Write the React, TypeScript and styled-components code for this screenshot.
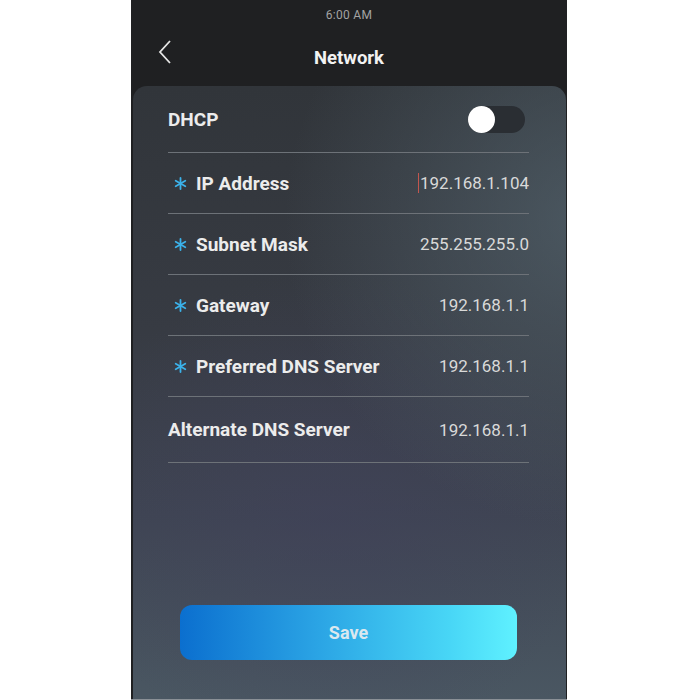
import React from "react";
import styled, { createGlobalStyle } from "styled-components";

const Global = createGlobalStyle`
  html, body { margin: 0; padding: 0; background: #ffffff; }
  body { font-family: Roboto, "Noto Sans", "Liberation Sans", sans-serif; }
`;

const Screen = styled.div`
  width: 436px;
  height: 699px;
  margin-left: 131px;
  background: #1f2022;
  display: flex;
  flex-direction: column;
  border-bottom: 1px solid #8a9096;
`;

const StatusBar = styled.div`
  height: 30px;
  display: flex;
  align-items: center;
  justify-content: center;
  font-size: 12px;
  color: #a3a3a3;
  letter-spacing: 0.3px;
`;

const TitleBar = styled.div`
  position: relative;
  height: 56px;
  display: flex;
  align-items: center;
  justify-content: center;
`;

const BackButton = styled.button`
  position: absolute;
  left: 22px;
  top: 8px;
  width: 24px;
  height: 28px;
  padding: 0;
  border: none;
  background: transparent;
  display: flex;
  align-items: center;
  justify-content: center;
`;

const Title = styled.h1`
  margin: 0 0 1px 0;
  font-size: 18.5px;
  font-weight: 700;
  color: #f2f2f2;
`;

const Panel = styled.div`
  flex: 1;
  margin: 0 1px 0 2px;
  border-radius: 14px 14px 0 0;
  padding: 0 37px 0 35px;
  display: flex;
  flex-direction: column;
  background:
    radial-gradient(ellipse 70% 50% at 105% 22%, rgba(84, 100, 110, 0.7), rgba(84, 100, 110, 0) 100%),
    radial-gradient(ellipse 60% 40% at 45% 70%, rgba(64, 64, 90, 0.5), rgba(64, 64, 90, 0) 100%),
    linear-gradient(180deg, #31353a 0%, #373b43 40%, #3f4553 70%, #4a5762 100%);
`;

const Row = styled.div<{ $h: number }>`
  height: ${(p) => p.$h}px;
  display: flex;
  align-items: center;
  justify-content: space-between;
  border-bottom: 1px solid #6d7278;
`;

const LabelWrap = styled.div<{ $required?: boolean }>`
  display: flex;
  align-items: center;
  gap: 9px;
  padding-left: ${(p) => (p.$required ? "6px" : "0")};
`;

const Label = styled.span`
  font-size: 19px;
  font-weight: 700;
  color: #ececec;
`;

const Value = styled.span`
  font-size: 17px;
  color: #d9d9d9;
  display: flex;
  align-items: center;
`;

const Cursor = styled.span`
  display: inline-block;
  width: 1px;
  height: 20px;
  background: #c2564e;
  margin-right: 1px;
`;

const Toggle = styled.div`
  width: 57px;
  height: 27px;
  margin-right: 4px;
  border-radius: 14px;
  background: #2a2e33;
  display: flex;
  align-items: center;
`;

const Knob = styled.div`
  width: 27px;
  height: 27px;
  border-radius: 50%;
  background: #ffffff;
`;

const SaveButton = styled.button`
  margin: auto auto 39px;
  width: 337px;
  height: 55px;
  border: none;
  border-radius: 12px;
  background: linear-gradient(90deg, #0b6fcf 0%, #2aa3e4 40%, #48d6f6 80%, #5ff1ff 100%);
  font-family: inherit;
  font-size: 18px;
  font-weight: 700;
  color: #dbe8ef;
`;

const Asterisk = () => (
  <svg width="13" height="13" viewBox="0 0 13 13">
    <g stroke="#3bb2ea" strokeWidth="1.8" strokeLinecap="round">
      <line x1="6.5" y1="1" x2="6.5" y2="12" />
      <line x1="1.7" y1="3.75" x2="11.3" y2="9.25" />
      <line x1="1.7" y1="9.25" x2="11.3" y2="3.75" />
    </g>
  </svg>
);

const rows = [
  { label: "IP Address", value: "192.168.1.104", required: true, cursor: true, h: 60 },
  { label: "Subnet Mask", value: "255.255.255.0", required: true, h: 60 },
  { label: "Gateway", value: "192.168.1.1", required: true, h: 60 },
  { label: "Preferred DNS Server", value: "192.168.1.1", required: true, h: 60 },
  { label: "Alternate DNS Server", value: "192.168.1.1", required: false, h: 65 },
];

export default function App() {
  return (
    <>
      <Global />
      <Screen>
        <StatusBar>6:00 AM</StatusBar>
        <TitleBar>
          <BackButton aria-label="Back">
            <svg width="16" height="26" viewBox="0 0 16 26">
              <polyline points="13,2 3,13 13,24" fill="none" stroke="#e6e6e6" strokeWidth="1.8" />
            </svg>
          </BackButton>
          <Title>Network</Title>
        </TitleBar>
        <Panel>
          <Row $h={66}>
            <Label>DHCP</Label>
            <Toggle>
              <Knob />
            </Toggle>
          </Row>
          {rows.map((r) => (
            <Row key={r.label} $h={r.h}>
              <LabelWrap $required={r.required}>
                {r.required && <Asterisk />}
                <Label>{r.label}</Label>
              </LabelWrap>
              <Value>
                {r.cursor && <Cursor />}
                {r.value}
              </Value>
            </Row>
          ))}
          <SaveButton>Save</SaveButton>
        </Panel>
      </Screen>
    </>
  );
}
